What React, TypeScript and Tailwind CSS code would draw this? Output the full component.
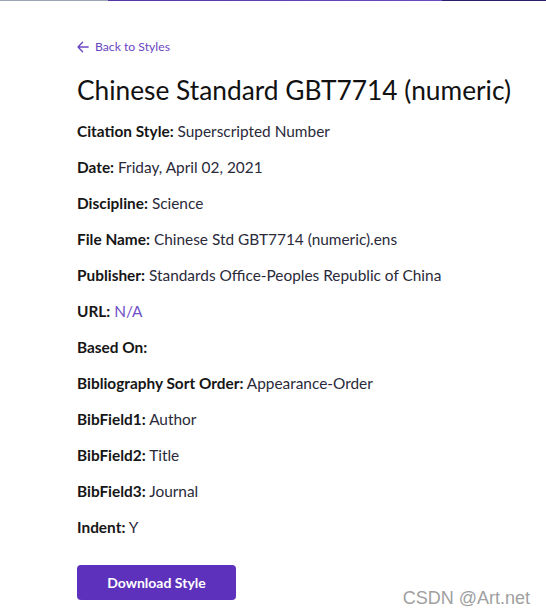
import React from "react";

const rows: { label: string; value?: string; link?: boolean }[] = [
  { label: "Citation Style:", value: "Superscripted Number" },
  { label: "Date:", value: "Friday, April 02, 2021" },
  { label: "Discipline:", value: "Science" },
  { label: "File Name:", value: "Chinese Std GBT7714 (numeric).ens" },
  { label: "Publisher:", value: "Standards Office-Peoples Republic of China" },
  { label: "URL:", value: "N/A", link: true },
  { label: "Based On:" },
  { label: "Bibliography Sort Order:", value: "Appearance-Order" },
  { label: "BibField1:", value: "Author" },
  { label: "BibField2:", value: "Title" },
  { label: "BibField3:", value: "Journal" },
  { label: "Indent:", value: "Y" },
];

export default function App() {
  return (
    <div
      className="relative w-[546px] h-[616px] bg-white overflow-hidden"
      style={{ fontFamily: "Lato, 'Noto Sans', sans-serif" }}
    >
      <div className="flex h-[1px] w-full">
        <div className="w-[108px] bg-[#9ea3b6]" />
        <div className="flex-1 bg-gradient-to-r from-[#5237a4] to-[#6a4bc4]" />
        <div className="w-[104px] bg-[#2b1d6b]" />
      </div>
      <div className="pl-[77px] pt-[36px] flex flex-col">
        <a className="flex items-center gap-[6px] h-[20px] text-[12.2px] text-[#6a45c2]">
          <svg width="12" height="12" viewBox="0 0 12 12" fill="none" stroke="#6a45c2" strokeWidth="1.3" strokeLinecap="round" strokeLinejoin="round">
            <path d="M11.2 6H1M5.6 1.2L1 6L5.6 10.8" />
          </svg>
          <span>Back to Styles</span>
        </a>
        <h1 className="mt-[15px] text-[26.3px] leading-[36px] text-[#111] font-normal">
          Chinese Standard GBT7714 (numeric)
        </h1>
        <div className="mt-[11px] flex flex-col gap-[12px]">
          {rows.map((r) => (
            <div key={r.label} className="text-[15.4px] leading-[24px] text-[#222]">
              <span className="font-bold text-[#161616]">{r.label}</span>
              {r.value && (
                <span className={r.link ? "text-[#7051c6]" : "text-[#2a2a3a]"}> {r.value}</span>
              )}
            </div>
          ))}
        </div>
        <button className="mt-[26px] w-[159px] h-[35px] rounded-[4px] bg-[#5e31bd] text-white font-bold text-[14px]">
          Download Style
        </button>
      </div>
      <div
        className="absolute right-[16px] bottom-[4px] text-[18px] text-[#a0a0a0]"
        style={{ fontFamily: "'Liberation Sans', Arial, sans-serif" }}
      >
        CSDN @Art.net
      </div>
    </div>
  );
}
